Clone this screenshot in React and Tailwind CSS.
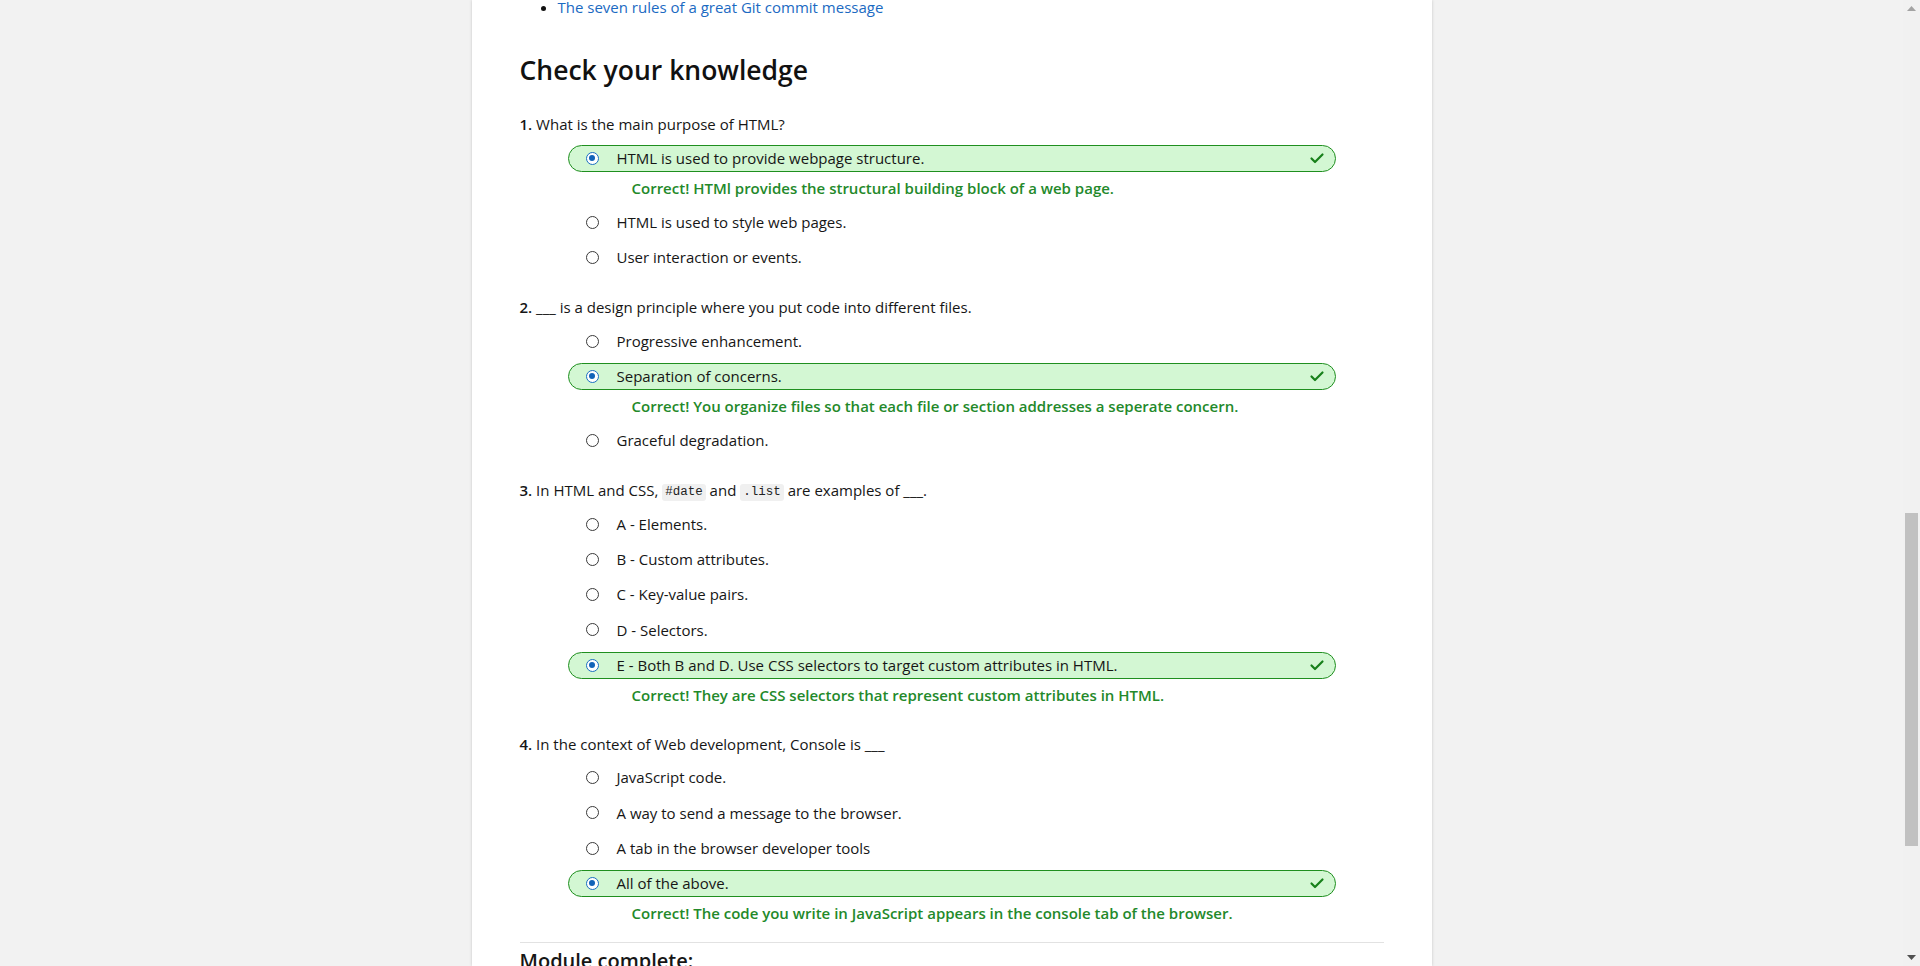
import React from 'react'

const preguntas = [
  {
    num: '1.',
    texto: <> What is the main purpose of HTML?</>,
    opciones: [
      { t: 'HTML is used to provide webpage structure.', ok: true, fb: 'Correct! HTMl provides the structural building block of a web page.' },
      { t: 'HTML is used to style web pages.' },
      { t: 'User interaction or events.' },
    ],
  },
  {
    num: '2.',
    texto: <> ___ is a design principle where you put code into different files.</>,
    opciones: [
      { t: 'Progressive enhancement.' },
      { t: 'Separation of concerns.', ok: true, fb: 'Correct! You organize files so that each file or section addresses a seperate concern.' },
      { t: 'Graceful degradation.' },
    ],
  },
  {
    num: '3.',
    texto: (
      <>
        {' '}In HTML and CSS, <Code>#date</Code> and <Code>.list</Code> are examples of ___.
      </>
    ),
    opciones: [
      { t: 'A - Elements.' },
      { t: 'B - Custom attributes.' },
      { t: 'C - Key-value pairs.' },
      { t: 'D - Selectors.' },
      { t: 'E - Both B and D. Use CSS selectors to target custom attributes in HTML.', ok: true, fb: 'Correct! They are CSS selectors that represent custom attributes in HTML.' },
    ],
  },
  {
    num: '4.',
    texto: <> In the context of Web development, Console is ___</>,
    opciones: [
      { t: 'JavaScript code.' },
      { t: 'A way to send a message to the browser.' },
      { t: 'A tab in the browser developer tools' },
      { t: 'All of the above.', ok: true, fb: 'Correct! The code you write in JavaScript appears in the console tab of the browser.' },
    ],
  },
]

function Code({ children }) {
  return (
    <code className="inline-block bg-[#f0f0f0] rounded-[3px] px-[3px] leading-[17px] text-[12.5px] text-[#222] align-[1px]" style={{ fontFamily: '"Liberation Mono", "DejaVu Sans Mono", monospace' }}>
      {children}
    </code>
  )
}

function Radio({ checked }) {
  if (checked) {
    return (
      <span className="w-[13px] h-[13px] rounded-full border border-[#1a6ec0] bg-white flex items-center justify-center shrink-0">
        <span className="w-[6px] h-[6px] rounded-full bg-[#1163b8]" />
      </span>
    )
  }
  return <span className="w-[13px] h-[13px] rounded-full border border-[#3a3a3a] bg-white shrink-0" />
}

function Opcion({ op }) {
  if (op.ok) {
    return (
      <div>
        <div className="h-[27px] flex items-center rounded-full border border-[#1f8f1f] bg-[#d3f7d3] pl-[17px] pr-[10px]">
          <Radio checked />
          <span className="ml-[18px] flex-1">{op.t}</span>
          <svg width="16" height="16" viewBox="0 0 16 16" fill="none" stroke="#17801a" strokeWidth="2.2" strokeLinecap="round" strokeLinejoin="round">
            <path d="M2.5 8.5 L6 12 L13.5 4.5" />
          </svg>
        </div>
        <p className="mt-[4px] mb-[1px] leading-6 pl-[64px] font-semibold text-[#23892a]">{op.fb}</p>
      </div>
    )
  }
  return (
    <div className="h-[27px] flex items-center pl-[18px]">
      <Radio />
      <span className="ml-[18px]">{op.t}</span>
    </div>
  )
}

function Scrollbar() {
  return (
    <div className="w-[17px] h-full bg-[#f1f1f1] flex flex-col items-center">
      <div className="h-[17px] flex items-center justify-center">
        <svg width="9" height="5" viewBox="0 0 9 5"><path d="M0 5 L4.5 0 L9 5 Z" fill="#a3a3a3" /></svg>
      </div>
      <div className="h-[496px]" />
      <div className="w-[13px] h-[333px] bg-[#c1c1c1]" />
      <div className="flex-1" />
      <div className="h-[17px] flex items-center justify-center">
        <svg width="9" height="5" viewBox="0 0 9 5"><path d="M0 0 L9 0 L4.5 5 Z" fill="#505050" /></svg>
      </div>
    </div>
  )
}

export default function App() {
  return (
    <div className="flex h-[966px] overflow-hidden bg-[#f2f2f2] text-[15px] text-[#161616]" style={{ fontFamily: '"Open Sans", "Noto Sans", Arial, sans-serif' }}>
      <div className="flex-1 flex justify-center">
        <main className="w-[960px] bg-white px-12 shadow-[0_0_3px_rgba(0,0,0,0.18)]">
          <ul className="mt-[-5px] pl-[38px] list-disc leading-6 text-[#111]">
            <li>
              <a href="#" className="text-[#1b6ac2]">The seven rules of a great Git commit message</a>
            </li>
          </ul>

          <h2 className="mt-[33px] text-[26.5px] font-semibold leading-9 text-[#111]">Check your knowledge</h2>

          <div className="mt-6 flex flex-col gap-6">
            {preguntas.map((q, i) => (
              <section key={i}>
                <p className="leading-6">
                  <span className="font-semibold">{q.num}</span>
                  {q.texto}
                </p>
                <div className="mt-[8.5px] mx-12 flex flex-col gap-[8.25px]">
                  {q.opciones.map((op, j) => (
                    <Opcion key={j} op={op} />
                  ))}
                </div>
              </section>
            ))}
          </div>

          <hr className="mt-[16px] border-0 border-t border-[#e2e2e2]" />
          <h3 className="mt-[4px] text-[20px] font-semibold leading-7">Module complete:</h3>
        </main>
      </div>
      <Scrollbar />
    </div>
  )
}
